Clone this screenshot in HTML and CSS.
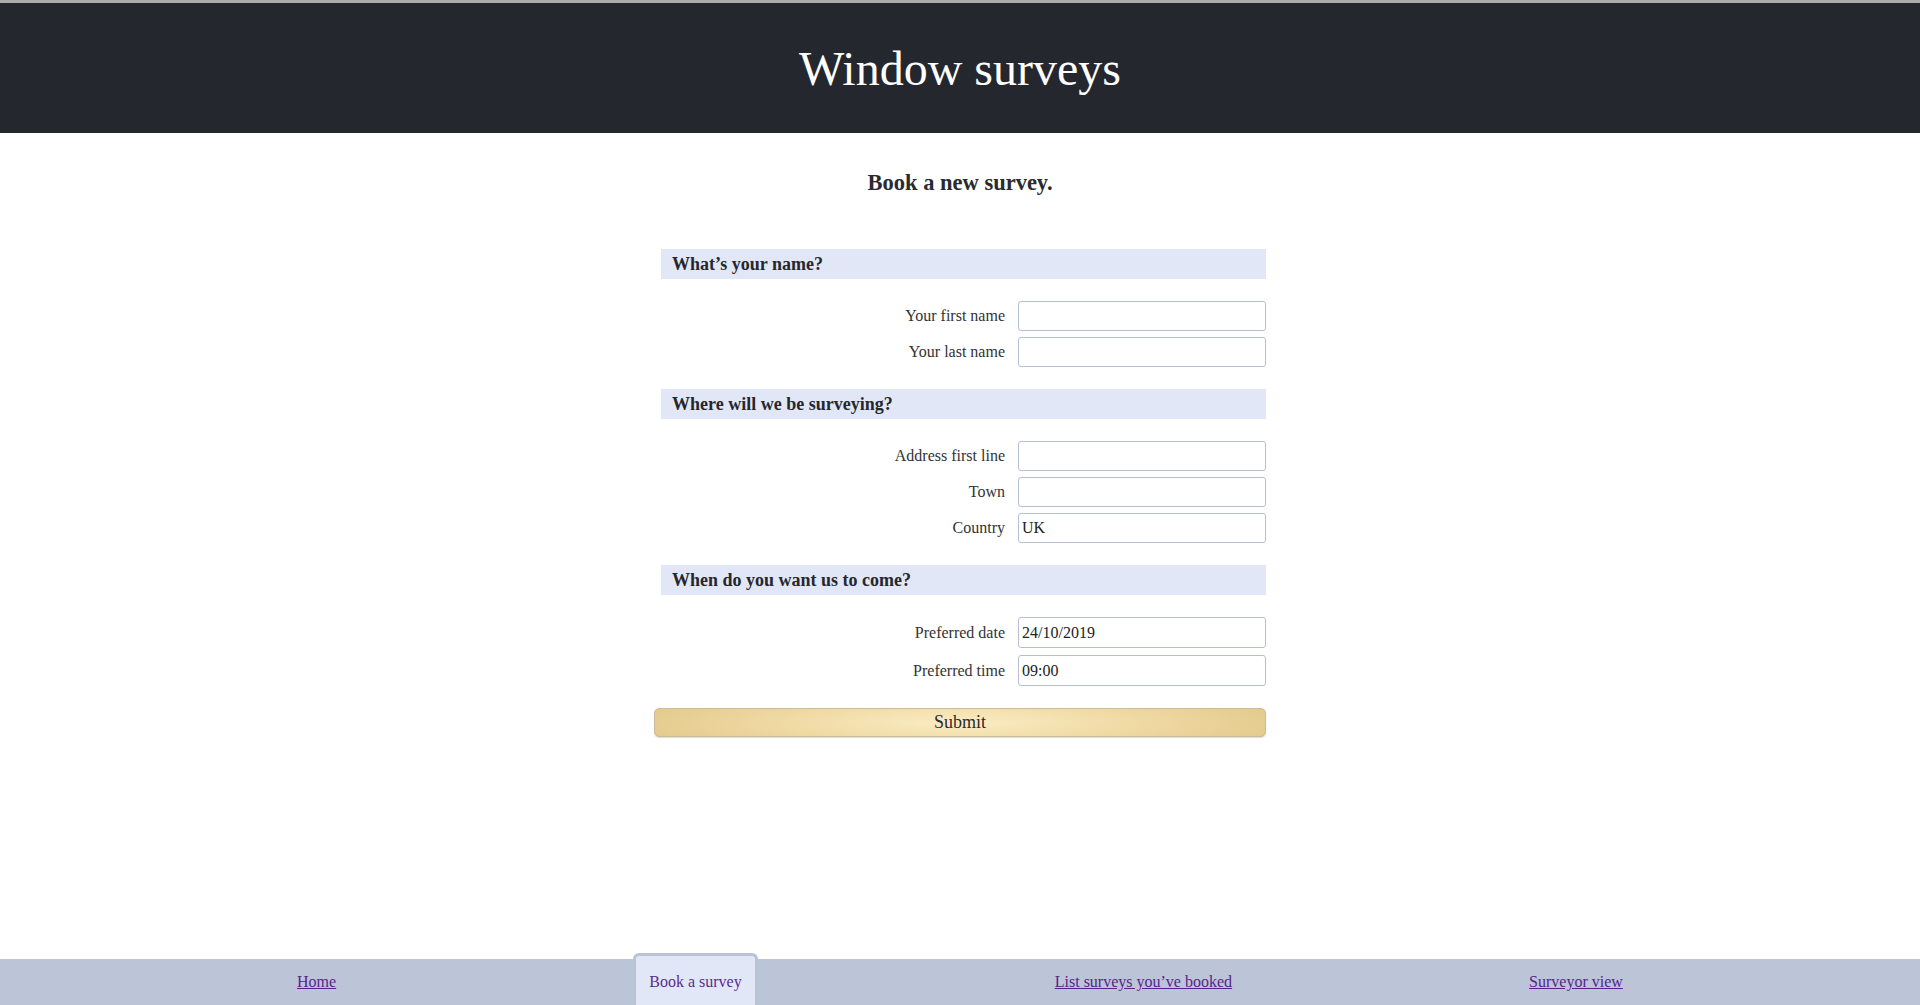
FILE: index.html
```html
<!DOCTYPE html>
<html lang="en">
<head>
<meta charset="utf-8">
<title>Window surveys</title>
<link rel="stylesheet" href="styles.css">
</head>
<body>
<header class="site-header">
  <h1>Window surveys</h1>
</header>
<main class="content">
  <h2 class="page-title">Book a new survey.</h2>
  <form class="booking-form">
    <h3 class="section-head">What’s your name?</h3>
    <div class="fields">
      <label for="fn">Your first name</label>
      <input id="fn" type="text">
      <label for="ln">Your last name</label>
      <input id="ln" type="text">
    </div>
    <h3 class="section-head">Where will we be surveying?</h3>
    <div class="fields">
      <label for="addr">Address first line</label>
      <input id="addr" type="text">
      <label for="town">Town</label>
      <input id="town" type="text">
      <label for="country">Country</label>
      <input id="country" type="text" value="UK">
    </div>
    <h3 class="section-head">When do you want us to come?</h3>
    <div class="fields fields-when">
      <label for="date">Preferred date</label>
      <input id="date" type="text" value="24/10/2019">
      <label for="time">Preferred time</label>
      <input id="time" type="text" value="09:00">
    </div>
    <button type="button" class="submit">Submit</button>
  </form>
</main>
<nav class="site-nav">
  <a href="#" class="nav-link">Home</a>
  <a href="#" class="nav-link nav-active">Book a survey</a>
  <a href="#" class="nav-link">List surveys you’ve booked</a>
  <a href="#" class="nav-link">Surveyor view</a>
</nav>
</body>
</html>
```
FILE: styles.css
```css
html, body {
  height: 100%;
}
body {
  margin: 0;
  font-family: "Liberation Serif", "Times New Roman", serif;
  color: #2b2b2e;
  background: #fff;
  display: flex;
  flex-direction: column;
  min-height: 100vh;
}
.site-header {
  border-top: 3px solid #ababab;
  background: #25272f;
  height: 130px;
  display: flex;
  align-items: center;
  justify-content: center;
  flex-shrink: 0;
}
.site-header h1 {
  margin: 0;
  font-size: 48px;
  font-weight: normal;
  color: #fff;
  line-height: 1;
  padding-top: 2px;
}
.content {
  flex: 1;
}
.page-title {
  margin: 34px 0 0;
  text-align: center;
  font-size: 22.5px;
  line-height: 32px;
  font-weight: bold;
  color: #2a2b30;
}
.booking-form {
  width: 612px;
  margin: 50px auto 0;
}
.section-head {
  margin: 0 0 0 7px;
  height: 30px;
  background: #e2e7f8;
  font-size: 18px;
  font-weight: bold;
  padding-left: 11px;
  display: flex;
  align-items: center;
  color: #26272c;
}
.fields {
  display: grid;
  grid-template-columns: 1fr 248px;
  column-gap: 13px;
  row-gap: 6px;
  padding: 22px 0;
  align-items: center;
}
.fields label {
  text-align: right;
  font-size: 16px;
  color: #333;
}
.fields input {
  height: 30px;
  box-sizing: border-box;
  border: 1px solid #b5bed3;
  border-radius: 3px;
  font-family: "Liberation Serif", "Times New Roman", serif;
  font-size: 16px;
  color: #222;
  padding: 0 3px;
  margin: 0;
  background: #fff;
}
.fields-when {
  row-gap: 7px;
}
.fields-when input {
  height: 31px;
}
.submit {
  display: block;
  width: 100%;
  height: 29px;
  margin: 0;
  border: 1px solid #cbbd9a;
  border-radius: 5px;
  background: radial-gradient(ellipse 55% 140% at 50% 50%, #fbecc3 0%, #efd9a3 55%, #e3c98b 100%);
  box-shadow: 0 1px 1px rgba(0, 0, 0, 0.15);
  font-family: "Liberation Serif", "Times New Roman", serif;
  font-size: 18px;
  color: #2b2b2b;
  padding: 0;
}
.site-nav {
  flex-shrink: 0;
  height: 46px;
  background: #bcc4d7;
  display: flex;
  justify-content: space-evenly;
}
.nav-link {
  display: flex;
  align-items: center;
  font-size: 16px;
  color: #57238b;
}
.nav-active {
  margin-top: -6px;
  padding: 3px 13px 0;
  background: #e2e7f8;
  border: 3px solid #b9c3d6;
  border-bottom: 0;
  border-radius: 6px 6px 0 0;
  text-decoration: none;
  color: #5b2a8e;
}
```
